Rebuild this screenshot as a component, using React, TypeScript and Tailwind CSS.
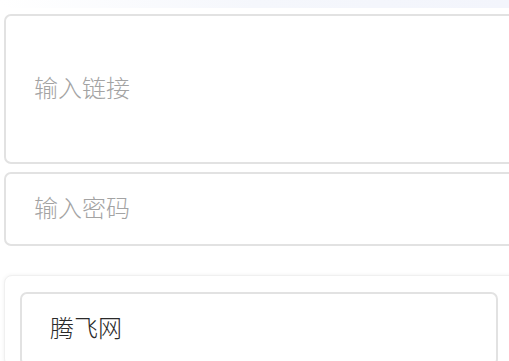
function App() {
  return (
    <div className="h-[361px] w-[509px] overflow-hidden bg-white font-['Noto_Sans_CJK_SC','Noto_Sans',sans-serif]">
      <div className="h-[8px] w-full bg-gradient-to-r from-white via-[#f5f7fc] to-[#f3f5fc]" />
      <div className="ml-1 mt-[6px] w-[520px]">
        <div className="flex h-[150px] items-center rounded-[7px] border-2 border-[#e2e2e2] pb-[4px] pl-[28px] text-[24px] font-light text-[#a3a3a3]">
          输入链接
        </div>
        <div className="mt-2 flex h-[74px] items-center rounded-[7px] border-2 border-[#e2e2e2] pb-[4px] pl-[28px] text-[24px] font-light text-[#a3a3a3]">
          输入密码
        </div>
        <div className="mt-[29px] rounded-[8px] border border-[#f0f0f0] bg-white px-[15px] pt-[16px] shadow-[0_0_4px_rgba(0,0,0,0.06)]">
          <div className="flex h-[74px] w-[478px] items-center rounded-[7px] border-2 border-[#e2e2e2] pb-[4px] pl-[28px] text-[24px] font-light text-[#2a2a2a]">
            腾飞网
          </div>
        </div>
      </div>
    </div>
  )
}

export default App
